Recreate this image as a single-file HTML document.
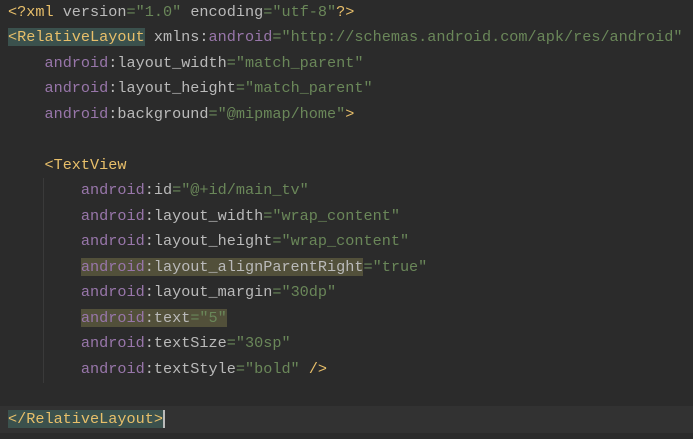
<html><head><style>
body{margin:0;background:#2b2b2b;width:693px;height:439px;overflow:hidden;position:relative}
.l{position:absolute;left:8px;height:25px;line-height:25px;font-family:"Liberation Mono",monospace;font-size:15.2px;color:#a9b7c6;white-space:pre}
.t{color:#e8bf6a}.n{color:#9876aa}.a{color:#bababa}.v{color:#6a8759}
.ht{background:#3b514d}.hy{background:#52503a}
</style></head><body>
<div style="position:absolute;left:0;top:406px;width:693px;height:27px;background:#323232"></div>
<div style="position:absolute;left:43px;top:178px;width:1px;height:205px;background:#3a3a3a"></div>
<div class="l" style="top:0px"><span class="t">&lt;?xml </span><span class="a">version</span><span class="v">="1.0"</span> <span class="a">encoding</span><span class="v">="utf-8"</span><span class="t">?&gt;</span></div>
<div class="l" style="top:25px"><span class="t ht">&lt;RelativeLayout</span> <span class="a">xmlns:</span><span class="n">android</span><span class="v">="http://schemas.android.com/apk/res/android"</span></div>
<div class="l" style="top:51px">    <span class="n">android</span><span class="a">:layout_width</span><span class="v">="match_parent"</span></div>
<div class="l" style="top:76px">    <span class="n">android</span><span class="a">:layout_height</span><span class="v">="match_parent"</span></div>
<div class="l" style="top:102px">    <span class="n">android</span><span class="a">:background</span><span class="v">="@mipmap/home"</span><span class="t">&gt;</span></div>
<div class="l" style="top:153px">    <span class="t">&lt;TextView</span></div>
<div class="l" style="top:178px">        <span class="n">android</span><span class="a">:id</span><span class="v">="@+id/main_tv"</span></div>
<div class="l" style="top:204px">        <span class="n">android</span><span class="a">:layout_width</span><span class="v">="wrap_content"</span></div>
<div class="l" style="top:229px">        <span class="n">android</span><span class="a">:layout_height</span><span class="v">="wrap_content"</span></div>
<div class="l" style="top:255px">        <span class="hy"><span class="n">android</span><span class="a">:layout_alignParentRight</span></span><span class="v">="true"</span></div>
<div class="l" style="top:280px">        <span class="n">android</span><span class="a">:layout_margin</span><span class="v">="30dp"</span></div>
<div class="l" style="top:306px">        <span class="hy"><span class="n">android</span><span class="a">:text</span><span class="v">="5"</span></span></div>
<div class="l" style="top:331px">        <span class="n">android</span><span class="a">:textSize</span><span class="v">="30sp"</span></div>
<div class="l" style="top:357px">        <span class="n">android</span><span class="a">:textStyle</span><span class="v">="bold"</span> <span class="t">/&gt;</span></div>
<div class="l" style="top:407px"><span class="t ht">&lt;/RelativeLayout&gt;</span><span style="border-left:2px solid #bbb"></span></div>
</body></html>
